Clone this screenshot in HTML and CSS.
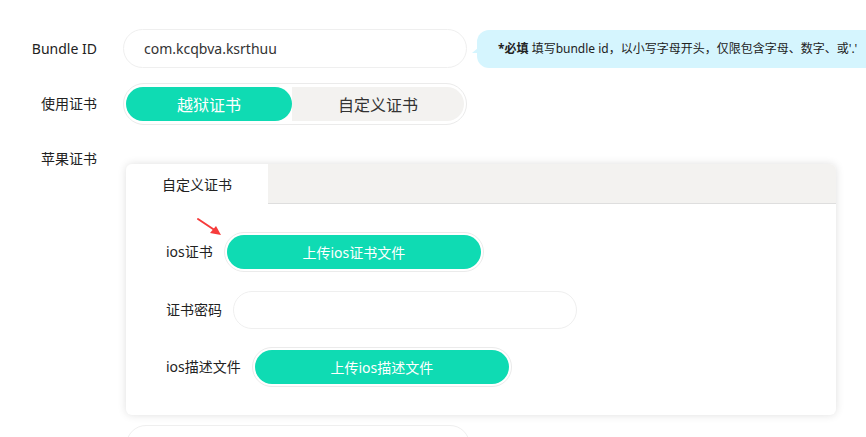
FILE: index.html
```html
<!DOCTYPE html>
<html lang="zh-CN">
<head>
<meta charset="utf-8">
<title>签名设置</title>
<meta name="viewport" content="width=device-width,initial-scale=1">
<link rel="stylesheet" href="styles.css">
</head>
<body>

<div class="form">
  <div class="row">
    <label class="label">Bundle ID</label>
    <input class="field" type="text" value="com.kcqbva.ksrthuu">
    <div class="tip"><b>*必填</b> 填写bundle id，以小写字母开头，仅限包含字母、数字、或'.'</div>
  </div>

  <div class="row row-cert">
    <label class="label">使用证书</label>
    <div class="switch">
      <span class="opt active">越狱证书</span>
      <span class="opt">自定义证书</span>
    </div>
  </div>

  <div class="row row-apple">
    <label class="label">苹果证书</label>
    <div class="card">
      <div class="card-head">
        <span class="tab">自定义证书</span>
      </div>
      <div class="card-body">
        <svg class="pointer" width="30" height="24" viewBox="0 0 30 24">
          <path d="M2 3L20 15" stroke="#f63b3b" stroke-width="2" stroke-linecap="round"/>
          <path d="M25 19L14 17L20 10Z" fill="#f63b3b"/>
        </svg>
        <div class="item">
          <span class="item-label">ios证书</span>
          <div class="btn-wrap"><button class="btn">上传ios证书文件</button></div>
        </div>
        <div class="item">
          <span class="item-label">证书密码</span>
          <input class="field pwd" type="password">
        </div>
        <div class="item">
          <span class="item-label">ios描述文件</span>
          <div class="btn-wrap"><button class="btn">上传ios描述文件</button></div>
        </div>
      </div>
    </div>
  </div>

  <div class="row row-next">
    <span class="label"></span>
    <input class="field next" type="text">
  </div>
</div>

</body>
</html>
```

FILE: styles.css
```css
/* Base */
*,*::before,*::after{box-sizing:border-box;margin:0;padding:0}
html,body{overflow:hidden}
body{
  font-family:"Noto Sans","Noto Sans CJK SC",sans-serif;
  font-size:14px;
  color:#222;
  background:#fff;
  padding-top:29px;
}
/* Rows */
.row{display:flex;align-items:center}
.label{width:123px;flex:none;padding-right:26px;text-align:right;line-height:20px}
.row-cert{margin-top:15px}
.row-apple{margin-top:24px;align-items:flex-start}
.row-next{margin-top:10px}

/* Inputs */
.field{
  flex:none;
  width:344px;height:39px;
  border:1px solid #efefef;border-radius:20px;
  padding:0 20px;
  font:inherit;color:#333;
  outline:none;background:#fff;
}
.next{margin-left:3px;height:40px}

/* Tip bubble */
.tip{
  flex:none;
  position:relative;
  margin-left:10px;
  height:38px;line-height:38px;
  padding:0 20px 0 21px;
  background:#d5f5fe;
  border-radius:12px;
  font-size:12px;color:#222;
  white-space:nowrap;
}
.tip b{font-weight:700}
.tip::before{
  content:"";position:absolute;left:-5px;top:18px;
  border-top:5px solid transparent;
  border-right:6px solid #d5f5fe;
}

/* Switch */
.switch{
  flex:none;
  width:344px;height:42px;
  display:flex;
  border:1px solid #ebebeb;border-radius:21px;
  padding:3px 2px;
}
.opt{
  flex:1;
  display:flex;align-items:center;justify-content:center;
  background:#f3f2f0;
  font-size:16px;color:#333;
}
.opt:last-child{border-radius:0 17px 17px 0}
.opt.active{flex:0 0 166px;background:#0fdbb3;color:#fff;border-radius:17px}

/* Card */
.card{
  flex:none;
  position:relative;
  margin:15px 0 0 3px;
  width:710px;height:251px;
  border-radius:6px;
  background:#fff;
  box-shadow:0 0 8px rgba(0,0,0,.13);
  overflow:hidden;
}
.card-head{
  display:flex;
  height:40px;
  background:#f3f2f0;
  border-bottom:1px solid #dedede;
}
.tab{
  width:142px;height:40px;
  display:flex;align-items:center;justify-content:center;
  background:#fff;
  font-size:14px;
}
.card-body{position:relative;padding:28px 40px 0}
.pointer{position:absolute;left:70px;top:12px}
.item{display:flex;align-items:center}
.item + .item{margin-top:19px}
.item:last-child{margin-top:18px}
.item-label{margin-right:11px;line-height:20px}
.item:first-child .item-label{margin-right:10px}
.pwd{height:38px}

/* Upload buttons */
.btn-wrap{border:1px solid #ebebeb;border-radius:20px;padding:2px}
.btn{
  display:block;
  width:254px;height:34px;
  border:none;border-radius:17px;
  background:#0fdbb3;color:#fff;
  font:inherit;font-size:14px;
  cursor:pointer;
}
```
